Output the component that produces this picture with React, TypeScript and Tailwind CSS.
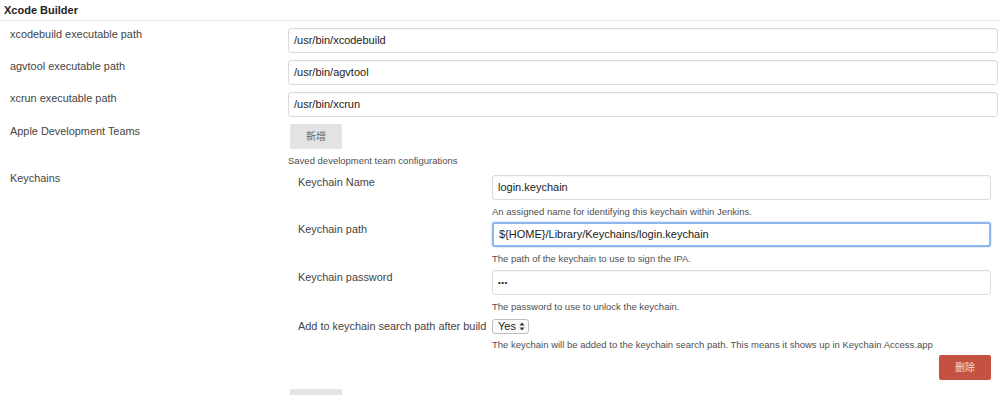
const font = { fontFamily: '"Liberation Sans", Arial, "Noto Sans CJK SC", sans-serif' };

function TextField({ value, focused = false, dots = false }: { value: string; focused?: boolean; dots?: boolean }) {
  return (
    <div
      className={`h-[25px] w-full rounded-[3px] bg-white pl-[5px] flex items-center text-[#222] ${
        dots ? 'text-[8px] tracking-[0.5px]' : 'text-[11px]'
      } ${
        focused
          ? 'border-2 border-[#8fb6ee] shadow-[0_0_2px_rgba(80,140,230,0.6)] pl-[4px]'
          : 'border border-[#dcdcdc] shadow-[inset_0_1px_1px_rgba(0,0,0,0.04)]'
      }`}
    >
      {value}
    </div>
  );
}

function Help({ children }: { children: string }) {
  return <div className="mt-[5px] text-[9.5px] leading-[13px] text-[#4f4f4f]">{children}</div>;
}

function OuterRow({ label, value }: { label: string; value: string }) {
  return (
    <div className="flex mt-[7px] first:mt-[6px]">
      <div className="w-[288px] shrink-0 pl-[10px] leading-[13px]">{label}</div>
      <div className="flex-1 pr-[2px]">
        <TextField value={value} />
      </div>
    </div>
  );
}

function InnerRow({
  label,
  value,
  help,
  focused,
  dots,
  className = '',
}: {
  label: string;
  value: string;
  help: string;
  focused?: boolean;
  dots?: boolean;
  className?: string;
}) {
  return (
    <div className={`flex ${className}`}>
      <div className="w-[204px] shrink-0 pl-[10px] pt-[1px] leading-[13px]">{label}</div>
      <div className="flex-1">
        <TextField value={value} focused={focused} dots={dots} />
        <Help>{help}</Help>
      </div>
    </div>
  );
}

export default function App() {
  return (
    <div className="w-[1000px] h-[395px] overflow-hidden bg-white text-[10.9px] text-[#454545]" style={font}>
      <div className="h-[21px] border-b border-[#e8e8e8] pl-[4px] text-[11px] font-bold leading-[21px] text-[#1e1e1e]">
        Xcode Builder
      </div>

      <OuterRow label="xcodebuild executable path" value="/usr/bin/xcodebuild" />
      <OuterRow label="agvtool executable path" value="/usr/bin/agvtool" />
      <OuterRow label="xcrun executable path" value="/usr/bin/xcrun" />

      <div className="flex mt-[7px]">
        <div className="w-[288px] shrink-0 pl-[10px] pt-[1px] leading-[13px]">Apple Development Teams</div>
        <div className="flex-1">
          <button className="ml-[2px] h-[25px] w-[52px] rounded-[2px] bg-[#e3e3e3] text-[10px] text-[#666]">
            新增
          </button>
          <div className="mt-[5px] text-[9.5px] leading-[13px] text-[#4f4f4f]">Saved development team configurations</div>
        </div>
      </div>

      <div className="flex">
        <div className="w-[288px] shrink-0 pl-[10px] pt-[5px] leading-[13px]">Keychains</div>
        <div className="flex-1 pt-[8px] pr-[9px]">
          <InnerRow
            label="Keychain Name"
            value="login.keychain"
            help="An assigned name for identifying this keychain within Jenkins."
          />
          <InnerRow
            className="mt-[4px]"
            label="Keychain path"
            value="${HOME}/Library/Keychains/login.keychain"
            help="The path of the keychain to use to sign the IPA."
            focused
          />
          <InnerRow
            className="mt-[5px]"
            label="Keychain password"
            value="•••"
            help="The password to use to unlock the keychain."
            dots
          />
          <div className="flex mt-[5px]">
            <div className="w-[204px] shrink-0 pl-[10px] pt-[2px] leading-[13px]">Add to keychain search path after build</div>
            <div className="flex-1">
              <div className="inline-flex h-[15px] items-center gap-[3px] rounded-[3px] border border-[#bdbdbd] bg-[#fbfbfb] pl-[5px] pr-[3px] text-[11px] text-[#222]">
                Yes
                <svg width="6" height="9" viewBox="0 0 6 9">
                  <path d="M3 0.5 L5.5 3.5 H0.5 Z" fill="#333" />
                  <path d="M3 8.5 L5.5 5.5 H0.5 Z" fill="#333" />
                </svg>
              </div>
              <div className="mt-[4px] text-[9.5px] leading-[13px] text-[#4f4f4f]">
                The keychain will be added to the keychain search path. This means it shows up in Keychain Access.app
              </div>
            </div>
          </div>
          <div className="flex justify-end mt-[4px]">
            <button className="h-[25px] w-[52px] rounded-[2px] bg-[#c55241] text-[10px] text-[#f4dcd8]">删除</button>
          </div>
        </div>
      </div>

      <div className="pl-[290px] mt-[9px]">
        <div className="h-[25px] w-[52px] rounded-[2px] bg-[#e3e3e3]" />
      </div>
    </div>
  );
}
